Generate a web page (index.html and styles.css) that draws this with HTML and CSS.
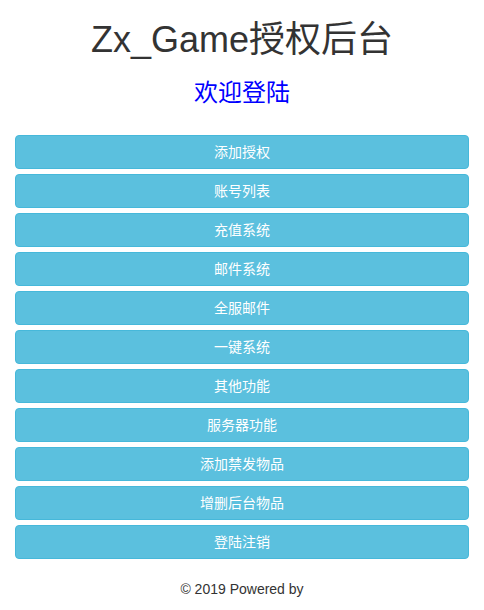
FILE: index.html
```html
<!DOCTYPE html>
<html lang="zh-CN">
<head>
<meta charset="utf-8">
<title>Zx_Game授权后台</title>
<link rel="stylesheet" href="styles.css">
</head>
<body>
<div class="container">
  <h1 class="title">Zx_Game授权后台</h1>
  <h3 class="welcome">欢迎登陆</h3>
  <div class="menu">
    <a class="btn" href="#">添加授权</a>
    <a class="btn" href="#">账号列表</a>
    <a class="btn" href="#">充值系统</a>
    <a class="btn" href="#">邮件系统</a>
    <a class="btn" href="#">全服邮件</a>
    <a class="btn" href="#">一键系统</a>
    <a class="btn" href="#">其他功能</a>
    <a class="btn" href="#">服务器功能</a>
    <a class="btn" href="#">添加禁发物品</a>
    <a class="btn" href="#">增删后台物品</a>
    <a class="btn" href="#">登陆注销</a>
  </div>
  <p class="footer">© 2019 Powered by</p>
</div>
</body>
</html>
```
FILE: styles.css
```css
html, body {
  margin: 0;
  padding: 0;
  background: #fff;
}
body {
  font-family: "Liberation Sans", "Noto Sans CJK SC", sans-serif;
  font-size: 14px;
  line-height: 1.42857;
  color: #333;
}
.container {
  padding: 0 15px;
}
.title {
  margin: 20px 0 10px;
  font-size: 36px;
  font-weight: 400;
  line-height: 1.1;
  text-align: center;
  color: #333;
}
.welcome {
  margin: 20px 0 29px;
  font-size: 24px;
  font-weight: 400;
  line-height: 1.1;
  text-align: center;
  color: #0000ff;
}
.menu {
  display: flex;
  flex-direction: column;
  gap: 5px;
}
.btn {
  display: block;
  box-sizing: border-box;
  height: 34px;
  padding: 6px 12px;
  border: 1px solid #46b8da;
  border-radius: 4px;
  background: #5bc0de;
  color: #fff;
  text-align: center;
  text-decoration: none;
  font-size: 14px;
  line-height: 20px;
}
.footer {
  margin: 21px 0 0;
  text-align: center;
  color: #333;
}
```
